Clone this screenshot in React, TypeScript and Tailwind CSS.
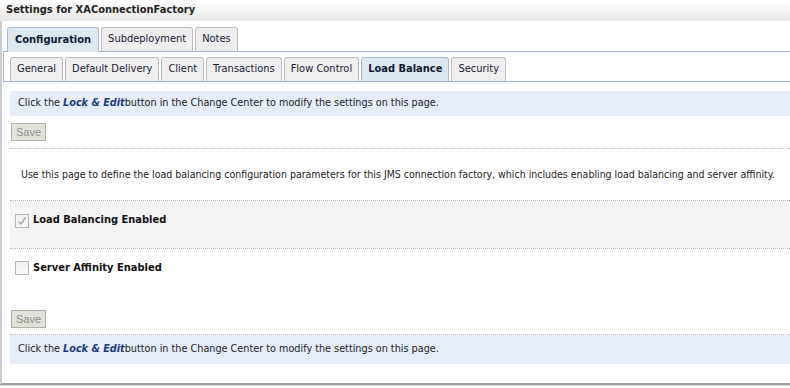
import React from "react";

const font = "font-['DejaVu_Sans_Condensed','DejaVu_Sans',sans-serif]";

function TopTab({ label, active }: { label: string; active?: boolean }) {
  return (
    <div
      className={
        "flex h-[24px] items-center rounded-t-[3px] border border-b-0 text-[11px] " +
        (active
          ? "mb-[-1px] h-[25px] border-[#a9b9c9] bg-[#dde8f1] px-[7px] font-bold text-[#0f1a33]"
          : "border-[#bcbcbc] bg-[#efefef] px-[6px] text-[#1a1a33]")
      }
    >
      {label}
    </div>
  );
}

function SubTab({ label, active }: { label: string; active?: boolean }) {
  return (
    <div
      className={
        "flex h-[24px] items-center rounded-t-[3px] border border-b-0 px-[6px] text-[11px] " +
        (active
          ? "border-[#a9b9c9] bg-[#dde8f1] font-bold text-[#0f1a33]"
          : "border-[#bcbcbc] bg-[#efefef] text-[#1a1a33]")
      }
    >
      {label}
    </div>
  );
}

function InfoBar({ tall }: { tall?: boolean }) {
  return (
    <div
      className={
        "flex items-center whitespace-pre bg-[#e6edf9] pl-[8px] text-[10.75px] text-[#222] " +
        (tall ? "h-[29px]" : "h-[25px]")
      }
    >
      {"Click the "}
      <span className="font-bold italic text-[#1b3a78]">Lock &amp; Edit</span>
      {"button in the Change Center to modify the settings on this page."}
    </div>
  );
}

function SaveButton() {
  return (
    <div className="flex h-[18px] w-[35px] items-center justify-center border border-[#aeaea6] bg-[#e2e2da] font-['Liberation_Sans',sans-serif] text-[11px] text-[#8c8c8c]">
      Save
    </div>
  );
}

function Checkbox({ checked }: { checked?: boolean }) {
  return (
    <div className="flex h-[14px] w-[14px] items-center justify-center border border-[#b4b4b4] bg-gradient-to-b from-[#f0f0f0] to-[#fafafa]">
      {checked && (
        <svg width="10" height="10" viewBox="0 0 10 10">
          <path d="M1.5 5.5 L4 8 L8.5 1.5" fill="none" stroke="#a8a8a8" strokeWidth="1.4" />
        </svg>
      )}
    </div>
  );
}

export default function App() {
  return (
    <div className={"h-[388px] w-[790px] overflow-hidden bg-white " + font}>
      {/* title */}
      <div className="flex h-[21px] items-center bg-gradient-to-b from-white to-[#e6e7e3] pl-[6px] text-[11px] font-bold text-[#222]">
        Settings for XAConnectionFactory
      </div>

      <div className="h-[364px] border-b-2 border-l-2 border-[#a3a3a3] border-l-[#c9cdd0] shadow-[0_1px_0_#d6d6d6]">
        {/* top tabs */}
        <div className="flex items-end gap-[2px] pl-[5px] pt-[6px]">
          <TopTab label="Configuration" active />
          <TopTab label="Subdeployment" />
          <TopTab label="Notes" />
        </div>

        {/* sub tabs */}
        <div className="ml-[1px] flex h-[31px] items-end gap-[2px] border-y border-l border-[#a7b6c5] pl-[6px]">
          <SubTab label="General" />
          <SubTab label="Default Delivery" />
          <SubTab label="Client" />
          <SubTab label="Transactions" />
          <SubTab label="Flow Control" />
          <SubTab label="Load Balance" active />
          <SubTab label="Security" />
        </div>

        <div className="pl-[8px] pt-[9px]">
          <InfoBar />
          <div className="ml-[1px] mt-[7px]">
            <SaveButton />
          </div>
          <div className="mt-[7px] border-t border-dotted border-[#b8b8b8]" />
          <div className="flex h-[51px] items-center whitespace-nowrap pl-[11px] text-[10.5px] text-[#222]">
            Use this page to define the load balancing configuration parameters for this JMS connection factory, which includes enabling load balancing and server affinity.
          </div>
          <div className="border-t border-dotted border-[#b8b8b8]" />
          <div className="flex h-[47px] items-center gap-[4px] bg-[#f4f4f4] pb-[8px] pl-[5px]">
            <Checkbox checked />
            <span className="text-[11px] font-bold text-[#111]">Load Balancing Enabled</span>
          </div>
          <div className="border-t border-dotted border-[#b8b8b8]" />
          <div className="flex h-[38px] items-center gap-[4px] pl-[5px]">
            <Checkbox />
            <span className="text-[11px] font-bold text-[#111]">Server Affinity Enabled</span>
          </div>
          <div className="ml-[1px] mt-[23px]">
            <SaveButton />
          </div>
          <div className="mt-[6px] border-t border-dotted border-[#b8b8b8]" />
          <InfoBar tall />
        </div>
      </div>
    </div>
  );
}
